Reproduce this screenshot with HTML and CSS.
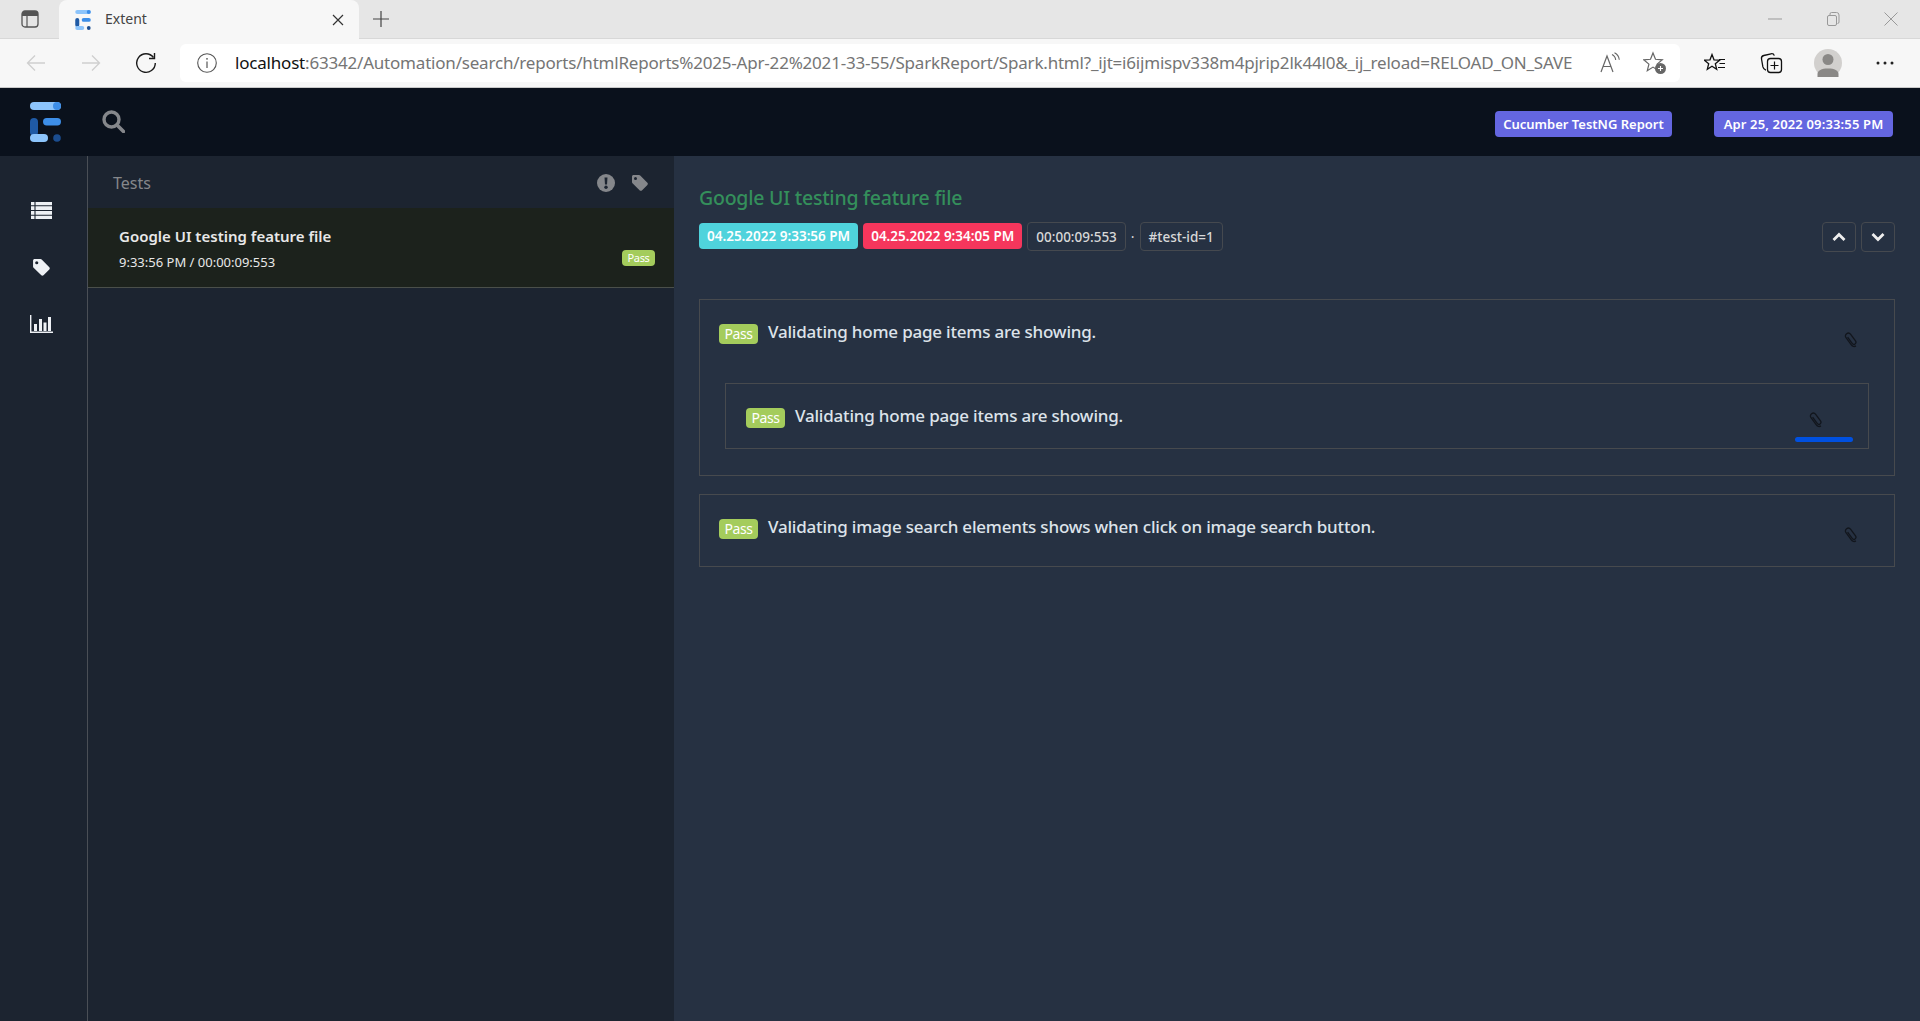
FILE: index.html
```html
<!DOCTYPE html>
<html lang="en">
<head>
<meta charset="utf-8">
<title>Extent</title>
<link rel="stylesheet" href="styles.css">
</head>
<body>
<svg class="defs" width="0" height="0">
  <defs>
    <symbol id="logo" viewBox="0 0 31 40">
      <rect x="0" y="0" width="31" height="8" rx="4" fill="#8cc4fb"/>
      <circle cx="27" cy="4" r="4" fill="#3d8ee8"/>
      <rect x="13" y="16" width="18" height="7.5" rx="3.7" fill="#3d8ee8"/>
      <rect x="0" y="16" width="8" height="18" rx="4" fill="#1f5aa5"/>
      <rect x="0" y="32" width="18" height="8" rx="4" fill="#8cc4fb"/>
      <circle cx="27" cy="36" r="3.8" fill="#1b4d8f"/>
    </symbol>
    <symbol id="clip" viewBox="0 0 14 16">
      <path d="M3.600 5.200l4.600 6.200c.7 1 2 1.200 2.900.5s1.100-2 .4-3L6.700 2.300C5.700 1 3.900.7 2.600 1.700S1 4.400 2 5.700l5.300 7.200c1.200 1.700 3.200 2 4.600 1" fill="none" stroke="#12161d" stroke-width="1.300"/>
    </symbol>
    <symbol id="tag" viewBox="0 0 18 18">
      <path d="M1 2.500C1 1.600 1.700 1 2.500 1H8c.5 0 .9.200 1.200.5l7.200 7.300c.6.600.6 1.500 0 2.100l-5.500 5.500c-.6.600-1.500.6-2.100 0L1.500 9.200C1.200 8.900 1 8.500 1 8zM4.500 3A1.500 1.500 0 1 0 4.500 6 1.500 1.500 0 0 0 4.500 3z" fill="currentColor" fill-rule="evenodd"/>
    </symbol>
  </defs>
</svg>

<div class="tabstrip">
  <div class="panel-btn">
    <svg width="18" height="18" viewBox="0 0 18 18"><rect x="1" y="1" width="16" height="16" rx="3" fill="none" stroke="#555" stroke-width="1.300"/><path d="M1 4a3 3 0 0 1 3-3h10a3 3 0 0 1 3 3v2H1z" fill="#555"/><path d="M6 6v11" stroke="#555" stroke-width="1.200"/></svg>
  </div>
  <div class="tab">
    <svg class="favicon" width="16" height="20"><use href="#logo"/></svg>
    <span class="tab-title">Extent</span>
    <svg class="tab-close" width="12" height="12" viewBox="0 0 12 12"><path d="M1 1l10 10M11 1L1 11" stroke="#333" stroke-width="1.200"/></svg>
  </div>
  <svg class="new-tab" width="18" height="18" viewBox="0 0 18 18"><path d="M9 1v16M1 9h16" stroke="#444" stroke-width="1.200"/></svg>
  <div class="window-ctrls">
    <svg width="14" height="14" viewBox="0 0 14 14"><path d="M0 7h14" stroke="#999"/></svg>
    <svg width="14" height="14" viewBox="0 0 14 14"><rect x="1.500" y="3.500" width="9" height="10" rx="1.500" fill="none" stroke="#999"/><path d="M4 3V2a1.500 1.500 0 0 1 1.500-1.500h5A2.500 2.500 0 0 1 13 3v7a1.500 1.500 0 0 1-1.500 1.500" fill="none" stroke="#999"/></svg>
    <svg width="14" height="14" viewBox="0 0 14 14"><path d="M.5.500l13 13M13.500.500l-13 13" stroke="#999"/></svg>
  </div>
</div>

<div class="toolbar">
  <div class="tool-btn"><svg width="20" height="20" viewBox="0 0 20 20"><path d="M19 10H1.500M9 2.500L1.500 10 9 17.500" fill="none" stroke="#cfcfcf" stroke-width="1.300"/></svg></div>
  <div class="tool-btn"><svg width="20" height="20" viewBox="0 0 20 20"><path d="M1 10h17.500M11 2.500l7.500 7.500-7.500 7.500" fill="none" stroke="#cfcfcf" stroke-width="1.300"/></svg></div>
  <div class="tool-btn"><svg width="22" height="22" viewBox="0 0 22 22"><path d="M18.500 5.500A9.300 9.300 0 1 0 20.300 11" fill="none" stroke="#1a1a1a" stroke-width="1.400"/><path d="M19.500 1v5.500H14" fill="none" stroke="#1a1a1a" stroke-width="1.400"/></svg></div>
  <div class="address">
    <svg class="info" width="20" height="20" viewBox="0 0 20 20"><circle cx="10" cy="10" r="9.300" fill="none" stroke="#555" stroke-width="1.100"/><path d="M10 8.500V15" stroke="#555" stroke-width="1.200"/><circle cx="10" cy="5.800" r=".9" fill="#555"/></svg>
    <div class="url"><span class="host">localhost</span>:63342/Automation/search/reports/htmlReports%2025-Apr-22%2021-33-55/SparkReport/Spark.html?_ijt=i6ijmispv338m4pjrip2lk44l0&amp;_ij_reload=RELOAD_ON_SAVE</div>
    <svg class="read-aloud" width="22" height="22" viewBox="0 0 22 22"><path d="M2 20L8 4l6 16M4.200 14.500h7.600" fill="none" stroke="#666" stroke-width="1.200"/><path d="M13 2.500c2 1 3.500 3 3.700 5.500M15.500 .8c2.600 1.300 4.500 4 4.800 7" fill="none" stroke="#666" stroke-width="1.100"/></svg>
    <svg class="star-add" width="24" height="24" viewBox="0 0 24 24"><path d="M10 2l2.500 6.300 6.800.5-5.200 4.300 1.600 6.600-5.700-3.600-5.700 3.600 1.600-6.600L.7 8.800l6.800-.5z" fill="none" stroke="#666" stroke-width="1.200"/><circle cx="17.500" cy="17.500" r="5.500" fill="#666"/><path d="M17.500 15v5M15 17.500h5" stroke="#fff" stroke-width="1.100"/></svg>
  </div>
  <div class="tool-right">
    <div class="tool-btn-r"><svg width="22" height="22" viewBox="0 0 22 22"><path d="M8 2.500l2 5.300 5.600.4-4.300 3.500 1.400 5.500L8 14.200l-4.700 3 1.400-5.500L.4 8.200 6 7.800z" fill="none" stroke="#111" stroke-width="1.300"/><path d="M15 7.500h6M15.500 11.500h5.500M14 15.500h7" stroke="#111" stroke-width="1.200"/></svg></div>
    <div class="tool-btn-r"><svg width="24" height="24" viewBox="0 0 24 24"><path d="M6 19l-.5-.1c-1.400-.5-2.200-1.500-2.600-3L1.500 8C1.200 6.300 2 5 3.800 4.500L11 2.800c1.500-.3 2.800.3 3.300 1.800" fill="none" stroke="#111" stroke-width="1.300"/><rect x="7.500" y="7.500" width="14" height="14" rx="3" fill="#f7f7f7" stroke="#111" stroke-width="1.300"/><path d="M14.500 10.500v8M10.500 14.500h8" stroke="#111" stroke-width="1.200"/></svg></div>
    <div class="tool-btn-r"><div class="avatar"><svg width="28" height="28" viewBox="0 0 28 28"><circle cx="14" cy="14" r="14" fill="#d2d0ce"/><circle cx="14" cy="10.500" r="5.500" fill="#8a8886"/><path d="M3.500 28v-3c0-3.500 4-5.500 10.500-5.500S24.500 21.500 24.500 25v3z" fill="#8a8886"/></svg></div></div>
    <div class="tool-btn-r"><svg width="18" height="4" viewBox="0 0 18 4"><circle cx="2" cy="2" r="1.500" fill="#222"/><circle cx="9" cy="2" r="1.500" fill="#222"/><circle cx="16" cy="2" r="1.500" fill="#222"/></svg></div>
  </div>
</div>

<header class="navbar">
  <svg class="nav-logo" width="31" height="40"><use href="#logo"/></svg>
  <svg class="nav-search" width="23" height="23" viewBox="0 0 23 23"><circle cx="9.500" cy="9.500" r="7.500" fill="none" stroke="#85878b" stroke-width="3.400"/><path d="M15 15l6.500 6.500" stroke="#85878b" stroke-width="3.600" stroke-linecap="round"/></svg>
  <span class="nav-badge nav-badge-first">Cucumber TestNG Report</span>
  <span class="nav-badge nav-badge-last">Apr 25, 2022 09:33:55 PM</span>
</header>

<div class="layout">
  <aside class="sidebar">
    <svg class="side-icon" width="21" height="17" viewBox="0 0 21 17"><path d="M0 0h21v17H0z" fill="#eef1f5"/><path d="M0 3.800h21M0 8.500h21M0 13.200h21M4 0v17" stroke="#1c2430" stroke-width="1.100"/></svg>
    <svg class="side-icon side-tag" width="19" height="19"><use href="#tag"/></svg>
    <svg class="side-icon side-chart" width="23" height="18" viewBox="0 0 23 18"><path d="M.7 0v17.300H23" fill="none" stroke="#eef1f5" stroke-width="1.400"/><path d="M4 9h3v7H4zM9 4h3v12H9zM13.500 7.500h3V16h-3zM18 2h3v14h-3z" fill="#eef1f5"/></svg>
  </aside>

  <section class="tests">
    <div class="tests-head">
      <span class="tests-title">Tests</span>
      <svg class="head-icon" width="18" height="18" viewBox="0 0 18 18"><circle cx="9" cy="9" r="9" fill="#85878b"/><path d="M7.500 3.500h3l-.5 7H8z" fill="#1c2430"/><circle cx="9" cy="13.300" r="1.700" fill="#1c2430"/></svg>
      <svg class="head-icon head-tag" width="18" height="18"><use href="#tag"/></svg>
    </div>
    <div class="test-row">
      <div class="test-info">
        <div class="test-name">Google UI testing feature file</div>
        <div class="test-time">9:33:56 PM / 00:00:09:553</div>
      </div>
      <span class="pass pass-small">Pass</span>
    </div>
  </section>

  <main class="detail">
    <h1 class="detail-title">Google UI testing feature file</h1>
    <div class="meta">
      <span class="chip chip-start">04.25.2022 9:33:56 PM</span>
      <span class="chip chip-end">04.25.2022 9:34:05 PM</span>
      <span class="chip chip-line">00:00:09:553</span>
      <span class="dot">·</span>
      <span class="chip chip-line">#test-id=1</span>
      <div class="pager">
        <span class="page-btn"><svg width="14" height="10" viewBox="0 0 14 10"><path d="M1.500 8L7 2.500 12.500 8" fill="none" stroke="#eee" stroke-width="2.800"/></svg></span>
        <span class="page-btn"><svg width="14" height="10" viewBox="0 0 14 10"><path d="M1.500 2L7 7.500 12.500 2" fill="none" stroke="#eee" stroke-width="2.800"/></svg></span>
      </div>
    </div>

    <div class="card card-first">
      <div class="step">
        <span class="pass">Pass</span>
        <span class="step-text">Validating home page items are showing.</span>
        <svg class="clip" width="14" height="16"><use href="#clip"/></svg>
      </div>
      <div class="card-inner">
        <div class="step">
          <span class="pass">Pass</span>
          <span class="step-text">Validating home page items are showing.</span>
          <svg class="clip clip-inner" width="14" height="16"><use href="#clip"/></svg>
        </div>
        <span class="progress"></span>
      </div>
    </div>

    <div class="card card-second">
      <div class="step">
        <span class="pass">Pass</span>
        <span class="step-text">Validating image search elements shows when click on image search button.</span>
        <svg class="clip" width="14" height="16"><use href="#clip"/></svg>
      </div>
    </div>
  </main>
</div>
</body>
</html>
```

FILE: styles.css
```css
* { box-sizing: border-box; }
html, body { margin: 0; height: 100%; }
body {
  display: flex;
  flex-direction: column;
  height: 1021px;
  overflow: hidden;
  font-family: "Noto Sans", "Open Sans", sans-serif;
  background: #263142;
}
.defs { position: absolute; }

.tabstrip {
  flex: none;
  height: 39px;
  display: flex;
  align-items: center;
  background: #e6e6e6;
  border-bottom: 1px solid #d8d8d8;
}
.panel-btn { width: 59px; padding-left: 21px; display: flex; align-items: center; }
.tab {
  width: 300px;
  height: 39px;
  margin-bottom: -1px;
  display: flex;
  align-items: center;
  padding: 0 15px 0 16px;
  background: #f7f7f7;
  border-radius: 8px 8px 0 0;
}
.tab-title { margin-left: 14px; padding-bottom: 2px; font-size: 14px; color: #444; flex: 1; }
.new-tab { margin-left: 13px; }
.window-ctrls { margin-left: auto; display: flex; gap: 44px; padding-right: 22px; }

.toolbar {
  flex: none;
  height: 49px;
  display: flex;
  align-items: center;
  padding-left: 8px;
  background: #f7f7f7;
  border-bottom: 1px solid #c9c9c9;
}
.tool-btn { width: 55px; display: flex; justify-content: center; }
.address {
  width: 1500px;
  height: 38px;
  margin-left: 7px;
  display: flex;
  align-items: center;
  padding: 0 13px 0 17px;
  background: #fff;
  border-radius: 6px;
}
.info { flex: none; }
.url {
  margin-left: 18px;
  width: 1345px;
  flex: none;
  padding-bottom: 2px;
  font-size: 17px;
  letter-spacing: -0.2px;
  white-space: nowrap;
  color: #757575;
}
.host { color: #111; }
.read-aloud { margin-left: 19px; flex: none; }
.star-add { margin-left: 22px; flex: none; }
.tool-right { display: flex; padding-left: 7px; }
.tool-btn-r { width: 56.500px; display: flex; justify-content: center; align-items: center; height: 28px; }
.avatar { width: 28px; height: 28px; }

.navbar {
  flex: none;
  height: 68px;
  display: flex;
  align-items: center;
  padding: 0 27px 0 30px;
  background: #0a111c;
}
.nav-search { margin-left: 41px; margin-top: -1px; }
.nav-badge {
  height: 26px;
  margin-top: 4px;
  display: flex;
  align-items: center;
  justify-content: center;
  border-radius: 4px;
  background: #6466e0;
  color: #fff;
  font-size: 13px;
  font-weight: 600;
}
.nav-badge-first { width: 177px; margin-left: auto; }
.nav-badge-last { width: 179px; margin-left: 42px; letter-spacing: .15px; }

.layout { flex: 1; display: flex; min-height: 0; }
.sidebar {
  width: 88px;
  flex: none;
  display: flex;
  flex-direction: column;
  align-items: center;
  padding-top: 46px;
  padding-right: 5px;
  background: #1c2430;
  border-right: 1px solid #4a4f56;
}
.side-tag { margin-top: 39px; color: #eef1f5; }
.side-chart { margin-top: 38px; }

.tests { width: 586px; flex: none; background: #1c2430; }
.tests-head {
  height: 52px;
  display: flex;
  align-items: center;
  padding: 2px 25px 0 25px;
  color: #85878b;
}
.tests-title { flex: 1; font-size: 16px; color: #85878b; }
.head-icon { margin-top: -1px; }
.head-tag { margin-left: 16px; color: #85878b; }
.test-row {
  height: 80px;
  display: flex;
  justify-content: space-between;
  padding: 0 19px 0 31px;
  background: #1c221c;
  border-bottom: 1px solid #4a4f4a;
}
.test-info { padding-top: 15px; }
.test-name { font-size: 15px; font-weight: 600; line-height: 26px; color: #e8e8e8; }
.test-time { font-size: 13px; line-height: 26px; color: #e8e8e8; }
.pass {
  flex: none;
  width: 39px;
  height: 20px;
  padding-bottom: 1px;
  display: flex;
  align-items: center;
  justify-content: center;
  border-radius: 4px;
  background: #a4cc5c;
  color: #fff;
  font-size: 14px;
  letter-spacing: -0.4px;
}
.pass-small { width: 33px; height: 16px; margin-top: 42px; font-size: 11px; }

.detail { flex: 1; min-width: 0; padding: 0 25px; background: #263142; }
.detail-title {
  margin: 28px 0 0;
  font-size: 19.500px;
  letter-spacing: -0.23px;
  line-height: 28px;
  font-weight: 500;
  color: #348f5b;
}
.meta { display: flex; align-items: flex-start; height: 30px; margin-top: 10px; gap: 5px; }
.chip {
  height: 26px;
  margin-top: 1px;
  padding: 0 8px;
  display: flex;
  align-items: center;
  border-radius: 4px;
  color: #fff;
  font-size: 13.500px;
  font-weight: 600;
  white-space: nowrap;
}
.chip-start { background: #4fd3dc; }
.chip-end { background: #f5365c; }
.chip-line {
  height: 29px;
  margin-top: 0;
  border: 1px solid #45494f;
  color: #d8d8d8;
  font-weight: 500;
}
.dot { color: #d8d8d8; font-size: 14px; line-height: 29px; }
.pager { margin-left: auto; display: flex; gap: 5px; }
.page-btn {
  width: 34px;
  height: 30px;
  display: flex;
  align-items: center;
  justify-content: center;
  border: 1px solid #45494f;
  border-radius: 4px;
}

.card { border: 1px solid #474a4e; }
.card-first { margin-top: 47px; height: 177px; }
.card-second { margin-top: 18px; height: 73px; }
.step {
  display: flex;
  align-items: flex-start;
  padding: 24px 0 0 19px;
}
.step-text {
  margin: -2px 0 0 10px;
  font-size: 17px;
  letter-spacing: -0.2px;
  line-height: 20px;
  font-weight: 500;
  color: #dde3ea;
}
.clip { margin: 8px 36px 0 auto; }
.card-inner {
  position: relative;
  height: 66px;
  margin: 35px 25px 0 25px;
  border: 1px solid #474a4e;
}
.card-inner .step { padding-left: 20px; }
.clip-inner { margin-right: 45px; margin-top: 4px; }
.progress {
  position: absolute;
  right: 15px;
  bottom: 6px;
  width: 58px;
  height: 5px;
  border-radius: 3px;
  background: #0050e0;
}
```
